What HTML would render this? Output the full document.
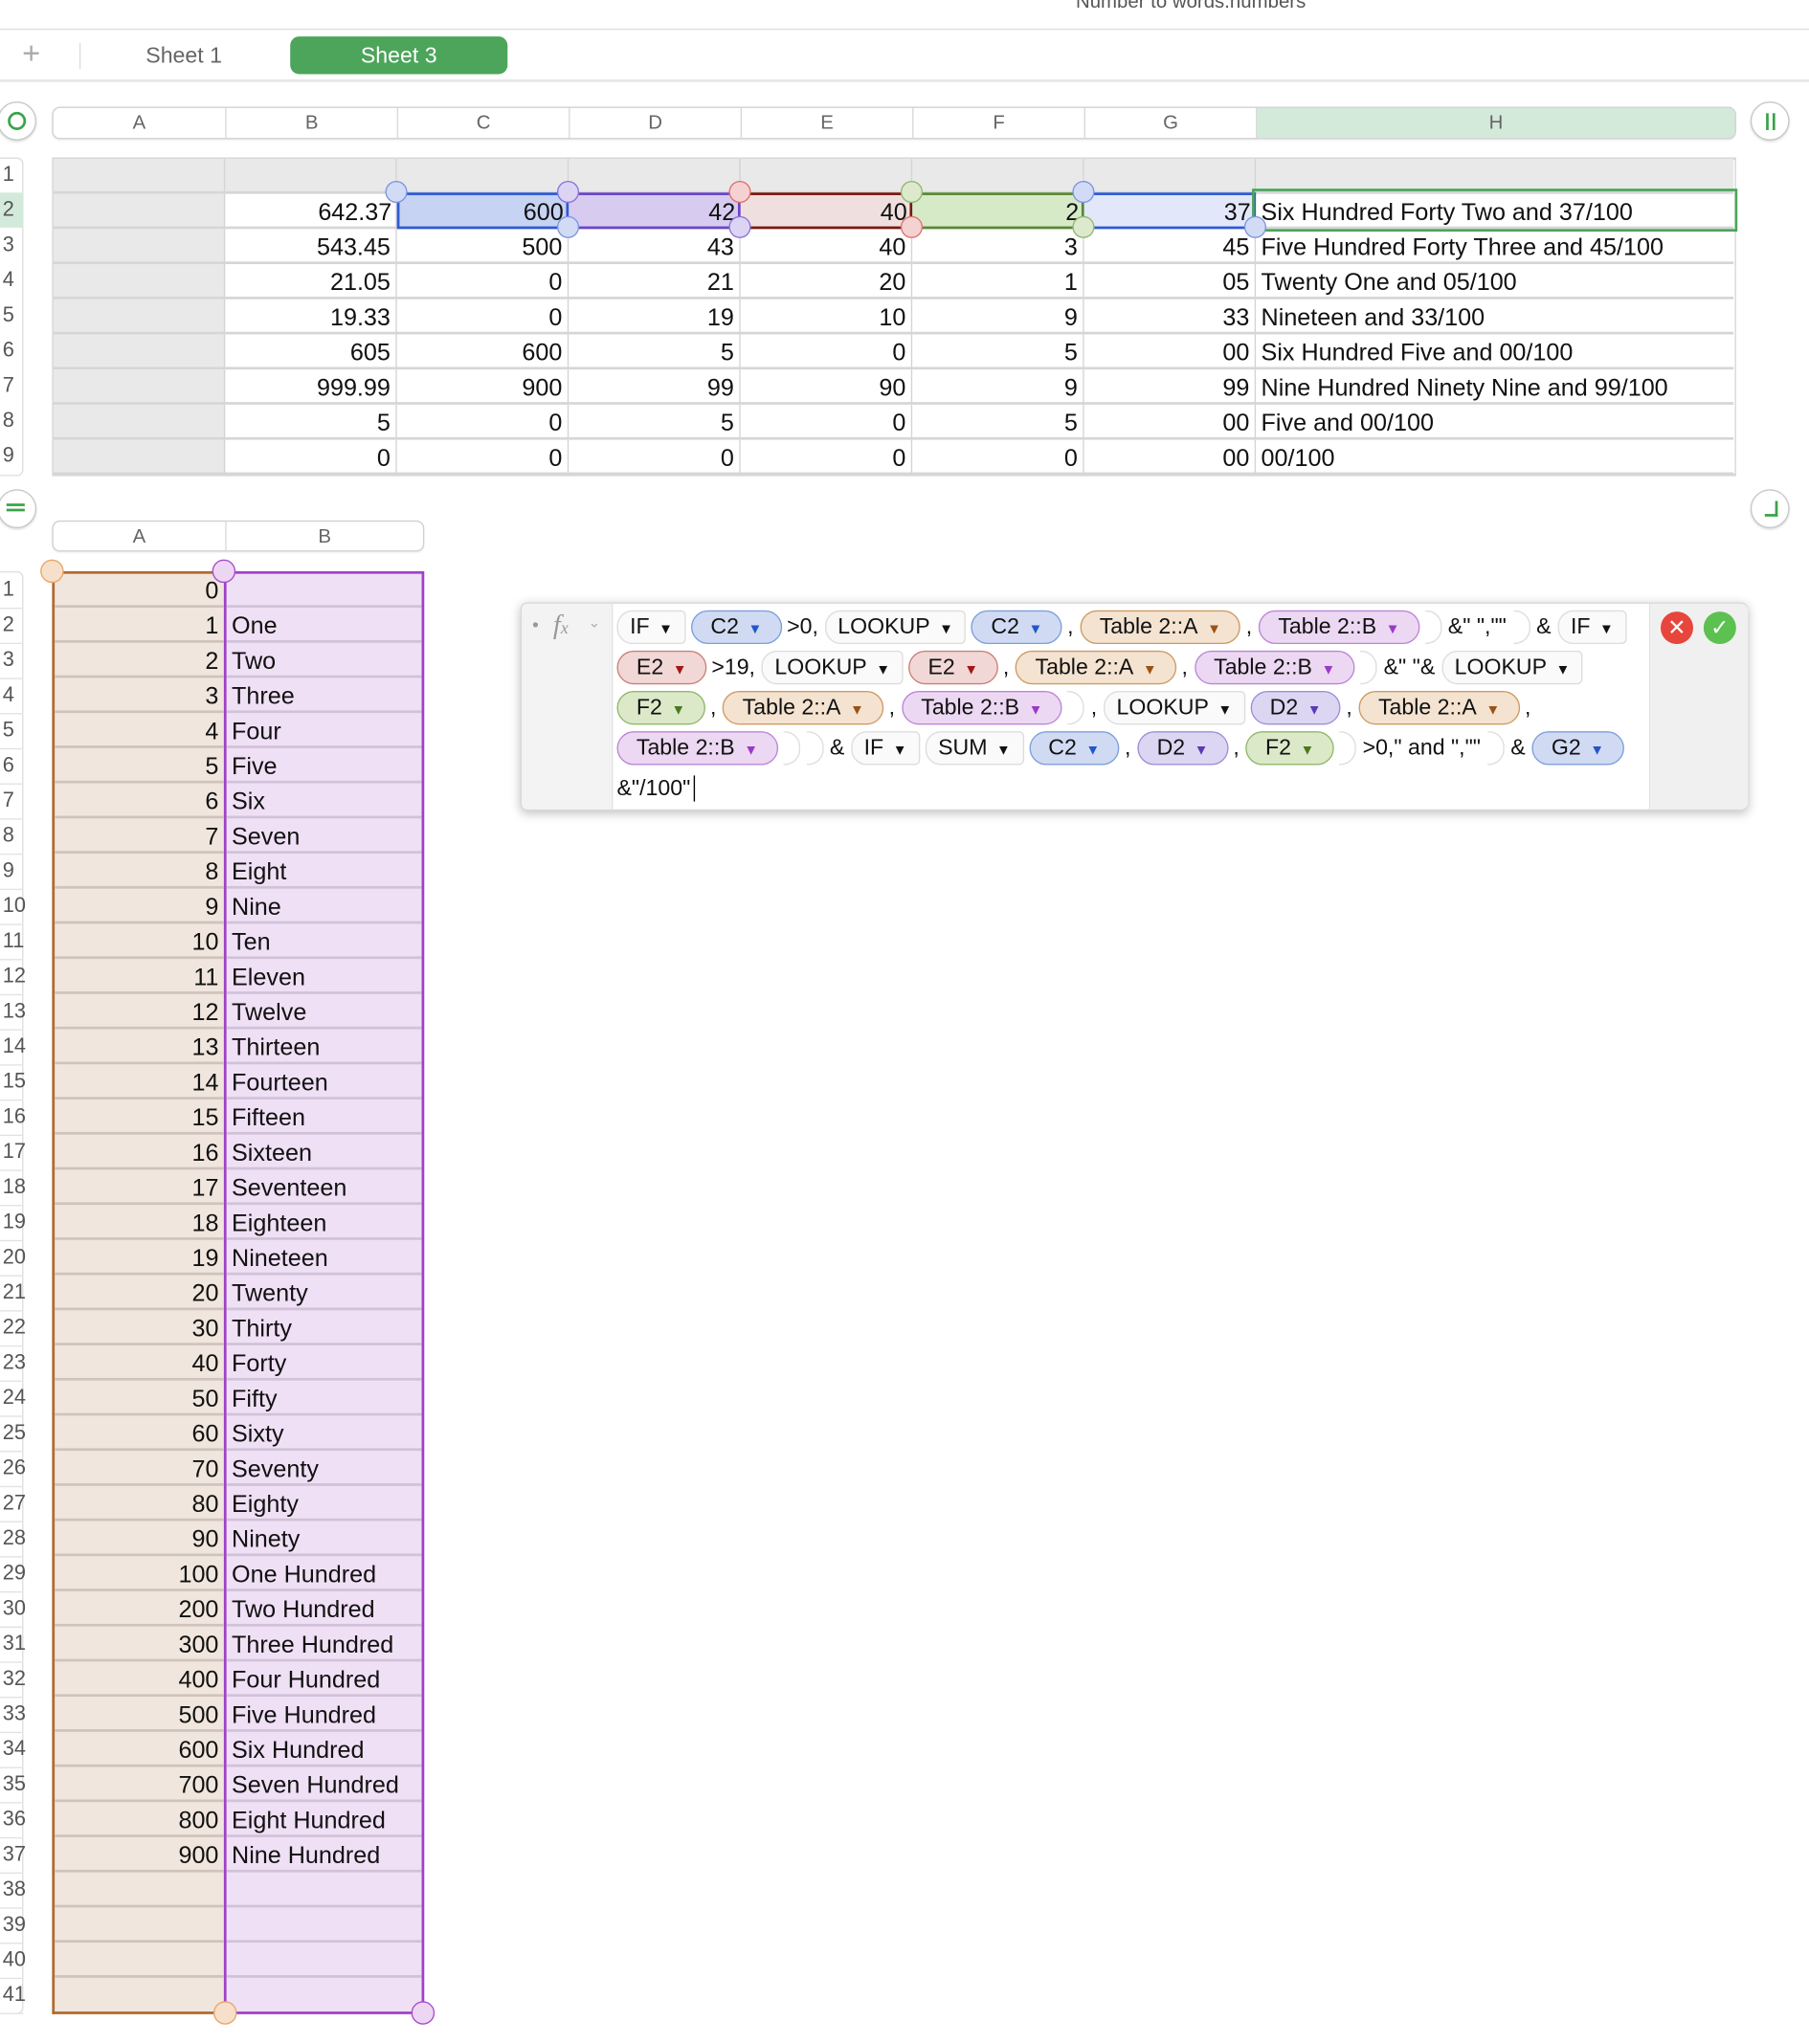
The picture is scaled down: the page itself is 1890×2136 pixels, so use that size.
<!DOCTYPE html>
<html><head><meta charset="utf-8">
<style>
*{box-sizing:border-box;margin:0;padding:0}
html,body{width:1890px;height:2136px;overflow:hidden;background:#fff}
#w{position:absolute;left:0;top:0;width:1390px;height:1571px;transform:scale(1.35971);transform-origin:0 0;font-family:"Liberation Sans",Arial,sans-serif;color:#111}
.a{position:absolute}
.hdr{position:absolute;top:82px;height:25px;border:1px solid #d0d0d0;border-radius:6px;background:#fff;display:flex;overflow:hidden;box-shadow:0 1px 1px rgba(0,0,0,.05)}
.hdr div{border-right:1px solid #d8d8d8;text-align:center;font-size:15px;color:#666;line-height:24px}
.hdr div:last-child{border-right:none}
.row{position:absolute;display:flex;height:27px}
.row div{height:27px;border-right:1px solid #d4d4d4;border-bottom:2px solid #d6d6d6;font-size:18.5px;line-height:27px;padding:0 4px;white-space:nowrap;overflow:visible}
.r{text-align:right}
.rn{position:absolute;left:0;width:18px;font-size:16px;color:#555;text-align:left;line-height:27px;padding-left:2px}
.circ{position:absolute;width:30px;height:30px;border-radius:50%;border:1px solid #c8c8c8;background:#fff;box-shadow:0 1px 2px rgba(0,0,0,.15)}
.h{position:absolute;width:17px;height:17px;border-radius:50%;border:1.5px solid}
.fl{position:absolute;left:474px;display:flex;align-items:center;height:28px;font-size:17px;white-space:nowrap}
.p{display:inline-block;height:26px;line-height:24px;border-radius:13px;border:1.5px solid;padding:0 14px;margin-right:4px;font-size:17px}
.f{background:#fafafa;border-color:#ddd;border-radius:12px 4px 4px 12px;padding:0 9px}
.b{background:#d0dbf3;border-color:#7e9fdc}
.o{background:#f4e3d0;border-color:#cf9a66}
.pu{background:#ecd8f2;border-color:#bb86d8}
.re{background:#f1d8d6;border-color:#cc7f78}
.g{background:#dce9c9;border-color:#8eb86a}
.v{background:#dcd6f3;border-color:#9e8fd8}
.t{margin-right:5px}
.cl{display:inline-block;width:13px;height:26px;border:1.5px solid #ddd;border-left:none;border-radius:0 12px 12px 0;margin-right:5px}
.ar{font-size:11px;margin-left:7px}
</style></head><body><div id="w">
<div class="a" style="left:0;top:-7px;width:1830px;text-align:center;font-size:15px;color:#555">Number to words.numbers</div>
<div class="a" style="left:0;top:22px;width:1390px;height:1px;background:#ddd"></div>
<div class="a" style="left:17px;top:28px;font-size:24px;color:#aaa;font-weight:300">+</div>
<div class="a" style="left:61px;top:33px;width:1px;height:20px;background:#ddd"></div>
<div class="a" style="left:112px;top:33px;font-size:17px;color:#666">Sheet 1</div>
<div class="a" style="left:223px;top:28px;width:167px;height:29px;border-radius:7px;background:#4ca55a;color:#fff;font-size:17px;text-align:center;line-height:29px">Sheet 3</div>
<div class="a" style="left:0;top:61px;width:1390px;height:2px;background:#e6e6e6"></div>

<div class="circ" style="left:-2px;top:78px"><div class="a" style="left:7px;top:7px;width:14px;height:14px;border:2px solid #3aa34a;border-radius:50%"></div></div>
<div class="hdr" style="left:40px;width:1294px">
<div style="width:133px">A</div><div style="width:132px">B</div><div style="width:132px">C</div><div style="width:132px">D</div><div style="width:132px">E</div><div style="width:132px">F</div><div style="width:132px">G</div><div style="flex:1;background:#d3eadb">H</div></div>
<div class="circ" style="left:1345px;top:78px"><div class="a" style="left:11px;top:8px;width:7px;height:13px;border-left:2px solid #3aa34a;border-right:2px solid #3aa34a"></div></div>

<div class="a" style="left:0;top:121px;width:18px;height:245px;border:1px solid #ddd;border-left:none;border-radius:0 5px 5px 0;background:#fff"></div>
<div class="a" style="left:0;top:148px;width:18px;height:27px;background:#d3eadb"></div>
<div class="rn" style="top:121px">1</div><div class="rn" style="top:148px">2</div><div class="rn" style="top:175px">3</div><div class="rn" style="top:202px">4</div><div class="rn" style="top:229px">5</div><div class="rn" style="top:256px">6</div><div class="rn" style="top:283px">7</div><div class="rn" style="top:310px">8</div><div class="rn" style="top:337px">9</div>

<div class="a" style="left:40px;top:121px;width:1294px;height:245px;border:2px solid #d6d6d6;border-right:1px solid #d6d6d6;background:#fff"></div>
<div class="row" style="left:41px;top:122px;background:#e9e9e9"><div style="width:132px"></div><div style="width:132px"></div><div style="width:132px"></div><div style="width:132px"></div><div style="width:132px"></div><div style="width:132px"></div><div style="width:132px"></div><div style="width:367px;border-right:none"></div></div>
<div id="t1"></div>

<div class="a" style="left:305px;top:148px;width:132px;height:28px;background:rgba(120,150,225,.42);border:2px solid #2e5bd6"></div>
<div class="a" style="left:437px;top:148px;width:132px;height:28px;background:rgba(150,120,215,.38);border:2px solid #6c45c8;border-left:none"></div>
<div class="a" style="left:569px;top:148px;width:132px;height:28px;background:rgba(200,140,140,.28);border:2px solid #7a1a10;border-left:none"></div>
<div class="a" style="left:701px;top:148px;width:132px;height:28px;background:rgba(150,200,110,.38);border:2px solid #5a8a35;border-left:none"></div>
<div class="a" style="left:833px;top:148px;width:132px;height:28px;background:rgba(160,180,240,.3);border:2px solid #2e5bd6;border-left:none"></div>
<div class="a" style="left:962px;top:145px;width:373px;height:33px;border:2px solid #4ca55a"></div>
<div id="t1b"></div>
<div class="h" style="left:296px;top:139px;background:#d2dbf5;border-color:#7c95e0"></div>
<div class="h" style="left:428px;top:139px;background:#dcd4f3;border-color:#8a74d8"></div>
<div class="h" style="left:428px;top:166px;background:#d2dbf5;border-color:#7c95e0"></div>
<div class="h" style="left:560px;top:139px;background:#f4d2d2;border-color:#e07070"></div>
<div class="h" style="left:560px;top:166px;background:#dcd4f3;border-color:#8a74d8"></div>
<div class="h" style="left:692px;top:139px;background:#dde9cc;border-color:#90b870"></div>
<div class="h" style="left:692px;top:166px;background:#f4d2d2;border-color:#e07070"></div>
<div class="h" style="left:824px;top:139px;background:#d2dbf5;border-color:#7c95e0"></div>
<div class="h" style="left:824px;top:166px;background:#dde9cc;border-color:#90b870"></div>
<div class="h" style="left:956px;top:166px;background:#d2dbf5;border-color:#7c95e0"></div>

<div class="circ" style="left:-2px;top:376px"><div class="a" style="left:6px;top:10px;width:14px;height:6px;border-top:2px solid #3aa34a;border-bottom:2px solid #3aa34a"></div></div>
<div class="circ" style="left:1345px;top:376px"><div class="a" style="left:10px;top:8px;width:10px;height:12px;border-right:2px solid #3aa34a;border-bottom:2px solid #3aa34a"></div></div>
<div class="hdr" style="left:40px;top:400px;width:286px;height:24px"><div style="width:133px">A</div><div style="flex:1">B</div></div>

<div class="a" style="left:0;top:439px;width:18px;height:1109px;border:1px solid #ddd;border-left:none;border-radius:0 5px 5px 0"></div>
<div class="a" style="left:40px;top:439px;width:134px;height:1109px;background:#f0e6dd;border:2px solid #b06a2c;border-right:none"></div>
<div class="a" style="left:172px;top:439px;width:154px;height:1109px;background:#f0e0f5;border:2px solid #a040c8"></div>
<div id="t2"></div>
<div class="h" style="left:31px;top:430px;background:#f6e0cc;border-color:#eba565;width:18px;height:18px"></div>
<div class="h" style="left:163px;top:430px;background:#ecd6f4;border-color:#a84ccc;width:18px;height:18px"></div>
<div class="h" style="left:164px;top:1538px;background:#f6e0cc;border-color:#eba565;width:18px;height:18px"></div>
<div class="h" style="left:316px;top:1538px;background:#ecd6f4;border-color:#a84ccc;width:18px;height:18px"></div>

<div class="a" style="left:400px;top:463px;width:943px;height:160px;background:#fff;border:1px solid #d8d8d8;border-radius:5px;box-shadow:0 2px 8px rgba(0,0,0,.25)">
 <div class="a" style="left:0;top:0;width:70px;height:158px;background:#f3f3f3;border-right:1px solid #e0e0e0;border-radius:5px 0 0 5px"></div>
 <div class="a" style="left:866px;top:0;width:76px;height:158px;background:#f0f0f0;border-left:1px solid #e0e0e0;border-radius:0 5px 5px 0"></div>
 <div class="a" style="left:8px;top:8px;font-size:14px;color:#999">•</div>
 <div class="a" style="left:24px;top:4px;font-size:21px;color:#999;font-style:italic;font-family:'Liberation Serif',serif">f<span style="font-size:13px">x</span></div>
 <div class="a" style="left:51px;top:8px;font-size:11px;color:#aaa">⌄</div>
 <div class="a" style="left:875px;top:6px;width:25px;height:25px;border-radius:50%;background:#e8453c;color:#fff;text-align:center;line-height:25px;font-size:17px">✕</div>
 <div class="a" style="left:908px;top:6px;width:25px;height:25px;border-radius:50%;background:#5cc150;color:#fff;text-align:center;line-height:25px;font-size:17px">✓</div>
</div>
<div class="fl" style="top:468px"><span class="p f">IF<span class="ar">▼</span></span><span class="p b">C2<span class="ar" style="color:#2456c8">▼</span></span><span class="t">&gt;0,</span><span class="p f">LOOKUP<span class="ar">▼</span></span><span class="p b">C2<span class="ar" style="color:#2456c8">▼</span></span><span class="t">,</span><span class="p o">Table 2::A<span class="ar" style="color:#9a5216">▼</span></span><span class="t">,</span><span class="p pu">Table 2::B<span class="ar" style="color:#9a3ac8">▼</span></span><span class="cl"></span><span class="t">&amp;" ",""</span><span class="cl"></span><span class="t">&amp;</span><span class="p f">IF<span class="ar">▼</span></span></div>
<div class="fl" style="top:499px"><span class="p re">E2<span class="ar" style="color:#a01818">▼</span></span><span class="t">&gt;19,</span><span class="p f">LOOKUP<span class="ar">▼</span></span><span class="p re">E2<span class="ar" style="color:#a01818">▼</span></span><span class="t">,</span><span class="p o">Table 2::A<span class="ar" style="color:#9a5216">▼</span></span><span class="t">,</span><span class="p pu">Table 2::B<span class="ar" style="color:#9a3ac8">▼</span></span><span class="cl"></span><span class="t">&amp;" "&amp;</span><span class="p f">LOOKUP<span class="ar">▼</span></span></div>
<div class="fl" style="top:530px"><span class="p g">F2<span class="ar" style="color:#4a7a20">▼</span></span><span class="t">,</span><span class="p o">Table 2::A<span class="ar" style="color:#9a5216">▼</span></span><span class="t">,</span><span class="p pu">Table 2::B<span class="ar" style="color:#9a3ac8">▼</span></span><span class="cl"></span><span class="t">,</span><span class="p f">LOOKUP<span class="ar">▼</span></span><span class="p v">D2<span class="ar" style="color:#5a3ab8">▼</span></span><span class="t">,</span><span class="p o">Table 2::A<span class="ar" style="color:#9a5216">▼</span></span><span class="t">,</span></div>
<div class="fl" style="top:561px"><span class="p pu">Table 2::B<span class="ar" style="color:#9a3ac8">▼</span></span><span class="cl"></span><span class="cl"></span><span class="t">&amp;</span><span class="p f">IF<span class="ar">▼</span></span><span class="p f">SUM<span class="ar">▼</span></span><span class="p b">C2<span class="ar" style="color:#2456c8">▼</span></span><span class="t">,</span><span class="p v">D2<span class="ar" style="color:#5a3ab8">▼</span></span><span class="t">,</span><span class="p g">F2<span class="ar" style="color:#4a7a20">▼</span></span><span class="cl"></span><span class="t">&gt;0," and ",""</span><span class="cl"></span><span class="t">&amp;</span><span class="p b">G2<span class="ar" style="color:#2456c8">▼</span></span></div>
<div class="fl" style="top:592px">&amp;"/100"<span style="display:inline-block;width:1px;height:20px;background:#000;margin-left:2px"></span></div>
</div>
<script>
var d1=[["642.37","600","42","40","2","37","Six Hundred Forty Two and 37/100"],["543.45","500","43","40","3","45","Five Hundred Forty Three and 45/100"],["21.05","0","21","20","1","05","Twenty One and 05/100"],["19.33","0","19","10","9","33","Nineteen and 33/100"],["605","600","5","0","5","00","Six Hundred Five and 00/100"],["999.99","900","99","90","9","99","Nine Hundred Ninety Nine and 99/100"],["5","0","5","0","5","00","Five and 00/100"],["0","0","0","0","0","00","00/100"]];
var h='',hb='';
d1.forEach(function(r,i){var top=149+i*27;
h+='<div class="row" style="left:41px;top:'+top+'px"><div style="width:132px;background:#e9e9e9"></div>';
for(var j=0;j<6;j++)h+='<div class="r" style="width:132px">'+(i==0?'':r[j])+'</div>';
h+='<div style="width:367px;border-right:none">'+r[6]+'</div></div>';
if(i==0){hb+='<div class="row" style="left:173px;top:'+top+'px">';for(var j=0;j<6;j++)hb+='<div class="r" style="width:132px;border:none;background:none">'+r[j]+'</div>';hb+='</div>';}
});
document.getElementById('t1').innerHTML=h;document.getElementById('t1b').innerHTML=hb;
var d2=[["0",""],["1","One"],["2","Two"],["3","Three"],["4","Four"],["5","Five"],["6","Six"],["7","Seven"],["8","Eight"],["9","Nine"],["10","Ten"],["11","Eleven"],["12","Twelve"],["13","Thirteen"],["14","Fourteen"],["15","Fifteen"],["16","Sixteen"],["17","Seventeen"],["18","Eighteen"],["19","Nineteen"],["20","Twenty"],["30","Thirty"],["40","Forty"],["50","Fifty"],["60","Sixty"],["70","Seventy"],["80","Eighty"],["90","Ninety"],["100","One Hundred"],["200","Two Hundred"],["300","Three Hundred"],["400","Four Hundred"],["500","Five Hundred"],["600","Six Hundred"],["700","Seven Hundred"],["800","Eight Hundred"],["900","Nine Hundred"],["",""],["",""],["",""],["",""]];
h='';d2.forEach(function(r,i){var top=440+i*27;
h+='<div class="rn" style="top:'+top+'px;border-bottom:1px solid #e2e2e2;width:18px">'+(i+1)+'</div>';
h+='<div class="row" style="left:42px;top:'+top+'px"><div class="r" style="width:130px;border-right:none;'+(i==40?'border-bottom:none':'border-bottom-color:#cfc4bd')+'">'+r[0]+'</div><div style="width:2px;padding:0;border:none"></div><div style="width:150px;border-right:none;'+(i==40?'border-bottom:none':'border-bottom-color:#d2c2d8')+'">'+r[1]+'</div></div>';});
document.getElementById('t2').innerHTML=h;
</script>
</body></html>
